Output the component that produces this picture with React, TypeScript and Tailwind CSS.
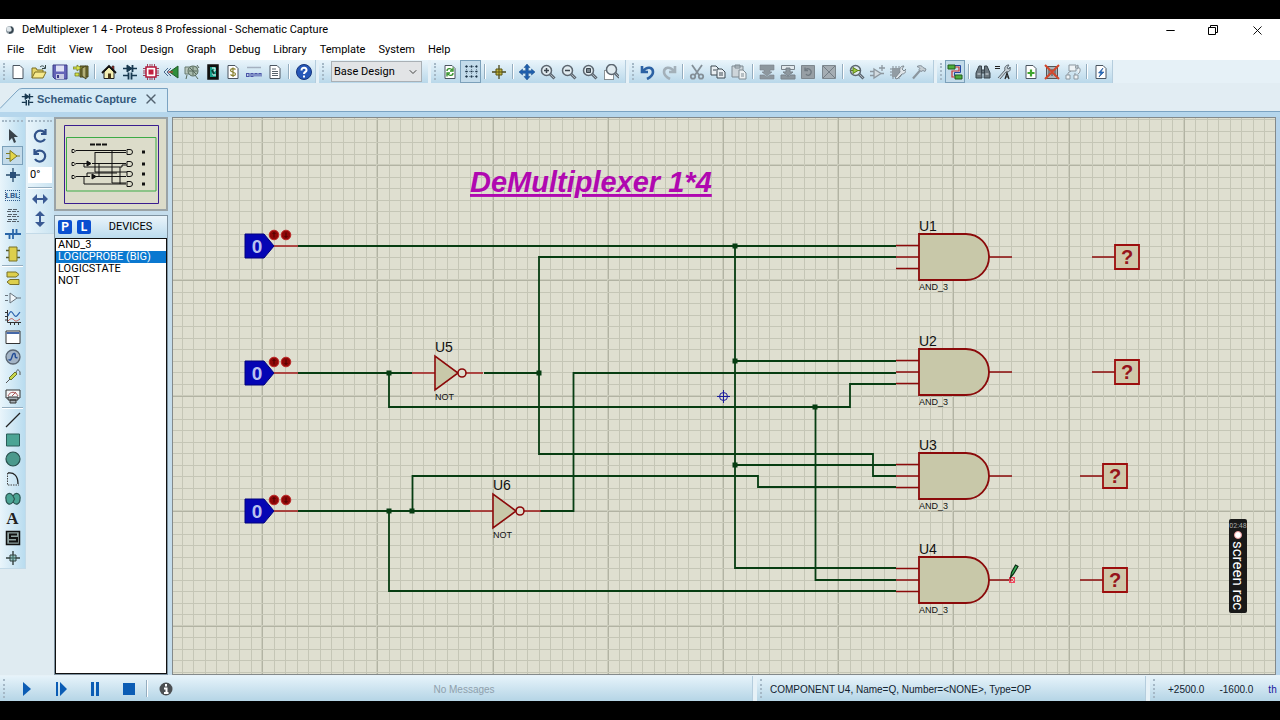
import type { ReactNode } from "react"
import { Minus, X, ChevronDown } from "lucide-react"

const menus = ["File", "Edit", "View", "Tool", "Design", "Graph", "Debug", "Library", "Template", "System", "Help"]

const page = <path d="M3 1.500h7l3 3v10H3z" fill="#fff" stroke="#4b5560" />

const lens = (
  <>
    <path d="M10 10l4.500 4.500" stroke="#5c6670" strokeWidth="3" />
    <path d="M10 10l4 4" stroke="#a9b4bd" />
    <circle cx="6.500" cy="6.500" r="5" fill="#e1ebf0" stroke="#5c6670" strokeWidth="1.500" />
  </>
)

const schematic = (
  <g stroke="#17384f" fill="#17384f">
    <path d="M1 4.500h14M1 11.500h5M10 11.500h5" fill="none" strokeWidth="1.500" />
    <path d="M5 1l5 3.500L5 8z" />
    <path d="M10.500 1v7M6.500 8.500v7M9.500 8.500v7" strokeWidth="1.800" />
  </g>
)

// all glyphs are drawn on a 16 x 16 box
const icons: Record<string, ReactNode> = {
  schematic,
  new: page,
  open: (
    <>
      <path d="M1 14V4h4l1 2h6v2" fill="#e5d56a" stroke="#7c6f22" />
      <path d="M1 14l3-6h11l-3 6z" fill="#f6e98c" stroke="#7c6f22" />
      <path d="M9 3c2-2 4-1 5 1M14.500 1v3.500H11" fill="none" stroke="#344" />
    </>
  ),
  save: (
    <>
      <path d="M1 1h14v14H3l-2-2z" fill="#6464b8" stroke="#3b3b86" />
      <path d="M4 1.500h8v6H4z" fill="#dfe1f5" />
      <path d="M4 10h8v5H4z" fill="#c8cbe4" />
      <path d="M5 11h2v3H5z" fill="#3b3b86" />
    </>
  ),
  exit: (
    <>
      <path d="M7 2h8v11H7z" fill="#7d7a34" stroke="#44431c" />
      <path d="M9 4l4-2v13l-4-3z" fill="#b3b077" stroke="#44431c" />
      <path d="M0 3h4V1l4 3-4 3V5H0zM2 9h4v3H2z" fill="#d8e34a" stroke="#66701b" strokeWidth=".7" />
    </>
  ),
  home: (
    <>
      <path d="M11 2h2v4h-2z" fill="#a33" stroke="#222" strokeWidth=".6" />
      <path d="M3 8v6.500h10V8L8 3z" fill="#f3efb4" stroke="#222" />
      <path d="M1 9l7-7 7 7" fill="none" stroke="#111" strokeWidth="1.800" />
      <path d="M7 9.500h3v5H7z" fill="#4a3816" />
    </>
  ),
  pcb: (
    <>
      <path d="M4.500 0v16M7 0v16M9 0v16M11.500 0v16M0 4.500h16M0 7h16M0 9h16M0 11.500h16" stroke="#8f1d35" strokeWidth=".8" />
      <path d="M3 3h10v10H3z" fill="#fff" stroke="#b3173b" strokeWidth="1.500" />
      <path d="M5.500 5.500h5v5h-5z" fill="#c21f3f" />
    </>
  ),
  view3d: (
    <>
      <path d="M15 2v12L6.500 8z" fill="#2f8f3b" stroke="#205c2a" />
      <path d="M5 4L1 8l4 4M8 4L4 8l4 4" fill="none" stroke="#4a6a8c" />
      <path d="M5 8h5" stroke="#c33" />
    </>
  ),
  gerber: (
    <>
      <path d="M1 3h12v7H1z" fill="#b9c7bd" stroke="#667a70" />
      <circle cx="9" cy="7" r="5" fill="#a9bcae" stroke="#56695c" />
      <path d="M5 7h8M9 3v8M6 4l6 6M3 11l-1 4M11 11l3 4M13 1l2 3" stroke="#56695c" />
    </>
  ),
  explorer: (
    <>
      <path d="M3 1h10v14H3z" fill="#111" stroke="#111" strokeWidth="1.500" />
      <path d="M5 3h6v10H5z" fill="#17a08c" />
      <path d="M7 4h3v3H8v4h3" fill="none" stroke="#fff" />
      <path d="M7 6l2 4" stroke="#0a4035" strokeWidth="2" />
    </>
  ),
  bom: (
    <>
      {page}
      <path d="M10.500 5.500C9 4 5.500 4.500 5.500 6.500S10.500 8 10.500 10 7 12 5.500 10.500M8 3.500v9.500" fill="none" stroke="#8b8434" strokeWidth="1.200" />
    </>
  ),
  source: (
    <>
      <path d="M1 3.500h14" stroke="#a5b1c0" strokeWidth="1.500" />
      <path d="M.500 9.500h2.500v3H.500zM5 9.500h2v3H5zM9 12.500v-3h2v3M13 12.500v-3h2v3" fill="none" stroke="#4b55a8" strokeWidth="1.200" />
    </>
  ),
  notes: (
    <>
      {page}
      <path d="M5 5h4M5 7.500h6M5 9.500h6M5 11.500h6" stroke="#59636b" />
    </>
  ),
  help: (
    <>
      <circle cx="8" cy="8" r="7.500" fill="#2557b8" stroke="#17357c" />
      <path d="M5.500 6.500C5.500 2.500 11 3 10.500 6.500 10.300 8 8 8 8 10M8 11.500v2" fill="none" stroke="#fff" strokeWidth="2" />
    </>
  ),
  redraw: (
    <>
      {page}
      <path d="M5 7c0-3 4-3 5-1M11 3.500V7H8M11 9c0 3-4 3-5 1M5 12.500V9h3" fill="none" stroke="#36912b" strokeWidth="1.400" />
    </>
  ),
  grid: (
    <>
      <path d="M2 2.500h12M2 7.500h12M2 12.500h12M3.500 1v14M8.500 1v14M13.500 1v14" stroke="#5a7285" strokeWidth=".8" strokeDasharray="1 1" />
      <path d="M2.500 2.500h2M7.500 2.500h2M12.500 2.500h2M2.500 7.500h2M7.500 7.500h2M12.500 7.500h2M2.500 12.500h2M7.500 12.500h2M12.500 12.500h2" stroke="#1d3344" strokeWidth="1.500" />
    </>
  ),
  origin: (
    <>
      <path d="M8 1v14M1 8h14" stroke="#4c4a1d" strokeWidth="1.300" />
      <path d="M5 5h6v6H5z" fill="#c2b53c" stroke="#5b5516" />
      <path d="M8 5v6M5 8h6" stroke="#5b5516" />
    </>
  ),
  pan: (
    <path d="M8 0l3 3.500H9.300v3.200h3.200V5L16 8l-3.500 3V9.300H9.300v3.200H11L8 16l-3-3.500h1.700V9.300H3.500V11L0 8l3.500-3v1.700h3.200V3.500H5z" fill="#1e5fae" stroke="#174a86" strokeWidth=".5" />
  ),
  zoomIn: <>{lens}<path d="M4 6.500h5M6.500 4v5" stroke="#3c464e" strokeWidth="1.500" /></>,
  zoomOut: <>{lens}<path d="M4 6.500h5" stroke="#3c464e" strokeWidth="1.500" /></>,
  zoomAll: <>{lens}<path d="M4.500 4.500h4v4h-4z" fill="#7b868e" stroke="#3c464e" /></>,
  zoomArea: (
    <>
      <path d="M1.500 6.500h9v9h-9z" fill="#fff" stroke="#333" strokeDasharray="1 1" />
      <g transform="translate(2 -1)">{lens}</g>
    </>
  ),
  undo: <path d="M2 2v6h6M3 7c4-5 10-4 10 1 0 3-2 5-6 7" fill="none" stroke="#2c62a4" strokeWidth="2.600" />,
  redo: <path d="M14 2v6H8M13 7C9 2 3 3 3 8c0 3 2 5 6 7" fill="none" stroke="#a3b0b9" strokeWidth="2.600" />,
  cut: (
    <g fill="none" stroke="#848f97" strokeWidth="1.800">
      <path d="M3 1l7 10M13 1L6 11" />
      <circle cx="4" cy="12.500" r="2.200" />
      <circle cx="12" cy="12.500" r="2.200" />
    </g>
  ),
  copy: (
    <g fill="#e9eff3" stroke="#3f4a53">
      <path d="M1 2h5l3 3v6H1z" />
      <path d="M7 5h5l3 3v6H7z" />
      <path d="M9 9h4M9 11h4M3 6h3" />
    </g>
  ),
  paste: (
    <g fill="#cdd5da" stroke="#7f8a92">
      <path d="M1 2h11v11H1zM4 1h5v3H4z" />
      <path d="M8 6h4l3 3v6H8z" fill="#eef2f4" />
      <path d="M10 10h3M10 12h3" />
    </g>
  ),
  blockCopy: <path d="M1 1h14v5h-4v2h2l-5 4-5-4h2V6H1zM1 11h4l3 2 3-2h4v4H1z" fill="#8d979e" stroke="#78828a" strokeWidth=".6" />,
  blockMove: (
    <g stroke="#78828a">
      <path d="M1.500 1.500h13v4h-13z" fill="#e2e9ed" />
      <path d="M6 4h4v4h3l-5 4-5-4h3zM1 11h4l3 2 3-2h4v4H1z" fill="#8d979e" />
    </g>
  ),
  blockRotate: (
    <>
      <path d="M1.500 1.500h13v13h-13z" fill="#979fa5" stroke="#7d878e" />
      <path d="M5 6c3-3 7 0 6 3s-4 3-5 1M5 3.500v3h3" fill="none" stroke="#6f7980" strokeWidth="1.300" />
    </>
  ),
  blockDelete: (
    <>
      <path d="M1.500 1.500h13v13h-13z" fill="#a5adb3" stroke="#7d878e" />
      <path d="M2 2l12 12M14 2L2 14" stroke="#737d85" />
    </>
  ),
  pick: <>{lens}<path d="M4 3.500l5 3-5 3zM2 6.500h2M9 6.500h2" fill="#9ccc3d" stroke="#5b7d1f" /></>,
  make: (
    <g stroke="#8d979f" strokeWidth="1.300">
      <path d="M4 5l7 4.500L4 14z" fill="#d3dbe0" />
      <path d="M0 7.500h4M0 11.500h4M11 9.500h3M12 1v6M9 4h6" fill="none" />
    </g>
  ),
  packaging: (
    <>
      <path d="M3 2v13M6 2v13M9 2v13M0 5h12M0 8h12M0 11h12" stroke="#7e8991" />
      <path d="M2 4h9v9H2z" fill="#929ca3" />
      <path d="M5 14l5-6c-1-4 1-6 4-6l-2 3 2 2 2-2c0 4-2 5-4 5l-5 5z" fill="#dfe5e9" stroke="#7e8991" />
    </>
  ),
  decompose: (
    <>
      <path d="M2 14.500L9.500 6" stroke="#8b969e" strokeWidth="2.200" />
      <path d="M6 2.500c3-1.500 5-1 6 1l3 1.500-1 2.500-2-1-2 1-2-2 1-1c-1-1-2-1.500-3-2z" fill="#c5cdd2" stroke="#84909a" />
    </>
  ),
  autoroute: (
    <>
      <path d="M8 3h4v4H5v6h4" fill="none" stroke="#c33" strokeWidth="1.200" />
      <path d="M8 1.500h5.500v7h-6v3H10" fill="none" stroke="#2547a0" />
      <path d="M1 1h7v4H1zM8 11h7v4H8z" fill="#4fae3d" stroke="#205c1d" />
    </>
  ),
  search: (
    <g fill="#6c7880" stroke="#37424a">
      <path d="M4 2h2.500v4L7 14H1V9zM12 2H9.500v4L9 14h6V9z" />
      <path d="M6.500 6h3v3h-3z" />
      <path d="M2.500 10h3M10.500 10h3" stroke="#dbe3e8" />
    </g>
  ),
  assign: (
    <g stroke="#5c6770" fill="none">
      <path d="M0 2.500h5M0 4.500h5" stroke="#222" />
      <path d="M3 14l7-8c-1-3 1-5 4-5l-2 3 2 1 1-2c1 4-1 5-4 5l-6 7" fill="#c6d0d6" />
      <path d="M10 15l2-6 2 6M10.500 13h3" stroke="#222" strokeWidth="1.200" />
    </g>
  ),
  newSheet: <>{page}<path d="M8 5.500v7M4.500 9h7" stroke="#3fa52d" strokeWidth="2.200" /></>,
  removeSheet: (
    <>
      <path d="M2.500 2.500h11v12h-11z" fill="#aeb5ba" stroke="#555" />
      <path d="M5 5v7M8 5v7M11 5v7" stroke="#444" />
      <path d="M1 1l14 14M15 1L1 15" stroke="#d3472b" strokeWidth="2" />
    </>
  ),
  exitSheet: (
    <g fill="#eef3f6" stroke="#8c979f">
      <path d="M4 1h7v6H4zM1 11h4v4H1zM9 11h4v4H9zM3 11V9l3-2M10 11V9" />
      <path d="M12 3c4 0 4 5 1 7M10 3l3-2v4z" />
    </g>
  ),
  bus: <>{page}<path d="M10 4L5.500 9H8l-2 4 5-5H8z" fill="#2b73c8" stroke="#1c5396" strokeWidth=".6" /></>,

  // mode toolbar
  select: <path d="M4 1v12l3-3 2 5 2-1-2-5h4z" fill="#39424a" />,
  component: <path d="M1 5.500h4M1 10.500h4M11 8h4M5 2.500L12 8l-7 5.500z" fill="#e4d648" stroke="#7f7a25" />,
  junction: (
    <>
      <path d="M8 1v14M1 8h14" stroke="#274a6b" strokeWidth="1.300" />
      <path d="M5 5h6v6H5z" fill="#284e78" />
    </>
  ),
  script: <path d="M3 2.500h10M2 4.500h12M3 7.500h10M2 9.500h12M3 12.500h10M2 14.500h12" stroke="#555f68" strokeDasharray="4 1" />,
  busMode: <path d="M0 8h16M4.500 8v5M8 8v5M8 3v5M11.500 3v5" fill="none" stroke="#2a66a8" strokeWidth="1.800" />,
  subcircuit: (
    <>
      <path d="M1 4.500h14M1 11.500h14" stroke="#555b2f" strokeWidth="1.500" />
      <path d="M4 1h8v14H4z" fill="#ddcf4c" stroke="#77702b" />
    </>
  ),
  terminal: (
    <g fill="#ddcf4c" stroke="#77702b">
      <path d="M2 2h9l3 2.500L11 7H2z" />
      <path d="M14 9.500H5L2 12l3 2.500h9z" />
    </g>
  ),
  pin: <path d="M5 3l7 5-7 5zM0 5.500h3M0 10.500h3M12 8h4" fill="#f0f6fa" stroke="#68737c" />,
  graph: (
    <g fill="none">
      <path d="M2.500 1v12.500H16M0 3.500h2M0 7.500h2M0 11h2M5.500 14v2M9.500 14v2M13.500 14v2" stroke="#333" />
      <path d="M3 7c3-7 4-4 6-1s3 1 6-3" stroke="#2b62ad" strokeWidth="1.200" />
      <path d="M3 12c3-3 4-3 6-1s3 1 6-1" stroke="#c2564b" />
    </g>
  ),
  popup: (
    <>
      <path d="M1 2h14v12.500H1z" fill="#fff" stroke="#333" />
      <path d="M1.500 3h13v2h-13z" fill="#4568a8" />
    </>
  ),
  generator: (
    <>
      <circle cx="8" cy="8" r="7" fill="#a3b4c6" stroke="#5a6673" strokeWidth="1.300" />
      <path d="M3.500 10.500c4 3 3-7 6-6 2 1-1 5 3 4" fill="none" stroke="#244e97" strokeWidth="1.500" />
    </>
  ),
  probe: (
    <>
      <path d="M1 15l4-4M11 5c1-5 3-3 4-1v3" fill="none" stroke="#555" />
      <path d="M4 10l6-6 2 2-6 6z" fill="#c7d64c" stroke="#6a732a" />
    </>
  ),
  instrument: (
    <g stroke="#333">
      <path d="M1 2h14v8H1z" fill="#f4f6f7" />
      <path d="M3 8c2-5 8-5 10 0M7 8l4-4" fill="none" stroke="#a55" />
      <path d="M3 9h10v3H3zM5 12h6v3H5z" fill="#a8b1b7" />
    </g>
  ),
  line: <path d="M1 15L15 1" stroke="#222" strokeWidth="1.300" />,
  box: <path d="M1.500 2h13v12h-13z" fill="#4ba494" stroke="#2b5d58" />,
  circle: <circle cx="8" cy="8" r="7" fill="#4b998c" stroke="#284f4c" strokeWidth="1.200" />,
  arc: (
    <g fill="none">
      <path d="M2.500 2v12H14" stroke="#444" strokeDasharray="1.500 1" />
      <path d="M3 2c6-1 10 3 10 11" stroke="#222" strokeWidth="1.300" />
    </g>
  ),
  path: <path d="M8 5c3-5 8-2 7 3 0 5-4 7-7 3-3 4-7 2-7-3-1-5 4-8 7-3zM8 5l1.500 3L8 11" fill="#4ba494" stroke="#2b5652" strokeWidth="1.200" />,
  symbol: (
    <>
      <path d="M1.500 1.500h13v13h-13z" fill="#8ea19f" stroke="#111" strokeWidth="1.500" />
      <path d="M12 4.500H5v3.500h7v3.500H4" fill="none" stroke="#111" strokeWidth="2" />
    </>
  ),
  marker: (
    <g stroke="#33413f" fill="none">
      <path d="M8 1v14M1 8h14" strokeWidth="1.400" />
      <path d="M5 5h6v6H5z" fill="#5da69a" fillOpacity=".5" />
    </g>
  ),
  rotateCw: <path d="M13 11a5.500 5.500 0 1 1-.5-6.500M13.500 1v5H9" fill="none" stroke="#31538a" strokeWidth="2.200" />,
  rotateCcw: <path d="M3 11a5.500 5.500 0 1 0 .5-6.500M2.500 1v5H7" fill="none" stroke="#31538a" strokeWidth="2.200" />,
  flipX: <path d="M0 8l5-5v4h6V3l5 5-5 5V9H5v4z" fill="#3a5a94" />,
  flipY: <path d="M8 0l5 5H9v6h4l-5 5-5-5h4V5H3z" fill="#3a5a94" />,

  // simulation
  play: <path d="M4 1l8 7-8 7z" fill="#0b5cb4" />,
  step: <path d="M3 1h2v14H3zM7 1l7 7-7 7z" fill="#0b5cb4" />,
  pause: <path d="M4 1h3v14H4zM9 1h3v14H9z" fill="#0b5cb4" />,
  stop: <path d="M2 2h12v12H2z" fill="#0b5cb4" />,
  info: (
    <>
      <circle cx="8" cy="8" r="6.500" fill="#4c4f52" />
      <path d="M8 3v2.500M6 7.500h2.500V12M6 12h4.500" fill="none" stroke="#fff" strokeWidth="2" />
    </>
  ),
}

type ToolbarProps = {
  padding: string
  sections: { width: string; items: string[] }[]
}

const toolbars: ToolbarProps[] = [
  {
    padding: "pr-px",
    sections: [
      { width: "w-[83px]", items: ["new", "open", "save", "exit"] },
      { width: "w-[186px]", items: ["home", "schematic", "pcb", "view3d", "gerber", "explorer", "bom", "source", "notes"] },
      { width: "w-[21px]", items: ["help"] },
    ],
  },
  {
    padding: "pr-1",
    sections: [
      { width: "w-[42px]", items: ["redraw", "grid"] },
      { width: "w-5", items: ["origin"] },
      { width: "w-[104px]", items: ["pan", "zoomIn", "zoomOut", "zoomAll", "zoomArea"] },
    ],
  },
  {
    padding: "pr-1",
    sections: [
      { width: "w-[42px]", items: ["undo", "redo"] },
      { width: "w-[62px]", items: ["cut", "copy", "paste"] },
      { width: "w-[82px]", items: ["blockCopy", "blockMove", "blockRotate", "blockDelete"] },
      { width: "w-[82px]", items: ["pick", "make", "packaging", "decompose"] },
    ],
  },
  {
    padding: "pr-px",
    sections: [
      { width: "w-5", items: ["autoroute"] },
      { width: "w-10", items: ["search", "assign"] },
      { width: "w-[62px]", items: ["newSheet", "removeSheet", "exitSheet"] },
      { width: "w-5", items: ["bus"] },
    ],
  },
]

const modes = [
  { height: "h-[138px]", items: ["select", "component", "junction", "label", "script", "busMode", "subcircuit"] },
  { height: "h-[138px]", items: ["terminal", "pin", "graph", "popup", "generator", "probe", "instrument"] },
  { height: "h-[158px]", items: ["line", "box", "circle", "arc", "path", "text", "symbol", "marker"] },
]

const devices = ["AND_3", "LOGICPROBE (BIG)", "LOGICSTATE", "NOT"]

const pressed = ["grid", "autoroute", "component"]

function Icon({ name }: { name: string }) {
  if (name === "label") {
    return <span className="border border-dotted border-[#2f5b8c] text-[8px] leading-[9px] font-bold text-[#2f5b8c]">LBL</span>
  }
  if (name === "text") {
    return <span className="font-['Liberation_Serif',serif] text-[17px] leading-4 font-bold text-[#222]">A</span>
  }
  return (
    <svg viewBox="0 0 16 16" className="size-4 shrink-0" aria-hidden="true">
      {icons[name]}
    </svg>
  )
}

function ToolButton({ name }: { name: string }) {
  const state = pressed.includes(name) ? "border-[#7ba0ba] bg-[#c3dbea]" : "border-transparent"
  return (
    <button type="button" aria-label={name} className={`flex min-h-0 min-w-0 flex-1 items-center justify-center border ${state}`}>
      <Icon name={name} />
    </button>
  )
}

function Grip() {
  return <span className="m-[3px] shrink-0 border-l-2 border-dotted border-[#a5b8c6]" />
}

function Toolbar({ padding, sections }: ToolbarProps) {
  return (
    <div className={`flex shrink-0 border-r border-[#b5cddd] bg-linear-to-b from-[#eaf5fb] to-[#b9d8ea] ${padding}`}>
      <Grip />
      {sections.map((s, i) => (
        <div key={i} className="flex">
          {i > 0 && <span className="mx-[3px] my-1 w-[2px] border-l border-[#94adbf] bg-white" />}
          <div className={`flex ${s.width}`}>
            {s.items.map((name) => <ToolButton key={name} name={name} />)}
          </div>
        </div>
      ))}
    </div>
  )
}

function Header() {
  return (
    <header className="shrink-0 bg-white text-black">
      <div className="flex h-[22px] items-center pl-[5px]">
        <svg viewBox="0 0 10 10" className="mr-[7px] size-[10px]" aria-hidden="true">
          <circle cx="5" cy="5" r="4" fill="#8b979f" />
          <circle cx="4" cy="4" r="2.500" fill="#dfe6ea" />
          <path d="M6 2c3 2 2 6-2 6" fill="none" stroke="#34424c" strokeWidth="1.500" />
        </svg>
        <h1 className="flex-1">DeMultiplexer 1 4 - Proteus 8 Professional - Schematic Capture</h1>
        <button type="button" aria-label="Minimize" className="flex w-[42px] justify-center"><Minus size={13} strokeWidth={2} /></button>
        <button type="button" aria-label="Restore" className="flex w-[43px] justify-center">
          <svg viewBox="0 0 12 12" className="size-3" fill="none" stroke="#000">
            <path d="M1.500 3.500h7v7h-7zM3.500 3.500v-2h7v7h-2" />
          </svg>
        </button>
        <button type="button" aria-label="Close" className="flex w-[46px] justify-center"><X size={15} strokeWidth={1.500} /></button>
      </div>
      <nav className="flex h-[19px] items-center gap-[13px] pl-[7px]">
        {menus.map((m) => <button type="button" key={m}>{m}</button>)}
      </nav>
    </header>
  )
}

function ToolbarRow() {
  return (
    <div className="flex h-[23px] shrink-0 gap-[3px] bg-[#e6f1f7]">
      <Toolbar {...toolbars[0]} />
      <div className="flex shrink-0 bg-linear-to-b from-[#eaf5fb] to-[#b9d8ea] pr-[6px]">
        <Grip />
        <div className="relative ml-1 flex">
          <select aria-label="Design variant" className="my-px w-[91px] appearance-none border border-[#a9b0b5] bg-[#e2e4e6] pl-[2px] leading-4">
            <option>Base Design</option>
          </select>
          <ChevronDown size={12} className="pointer-events-none absolute top-[6px] right-[3px] text-[#444]" />
        </div>
      </div>
      <Toolbar {...toolbars[1]} />
      <Toolbar {...toolbars[2]} />
      <Toolbar {...toolbars[3]} />
    </div>
  )
}

function TabRow() {
  return (
    <div className="flex h-[34px] shrink-0 flex-col bg-[#e2edf3]">
      <div className="flex flex-1 items-end border-b border-[#7ba3c2]">
        <div className="relative -mb-px flex h-6 w-[168px] items-center pb-[2px] pl-[21px]">
          <svg viewBox="0 0 168 24" className="absolute inset-0 size-full" aria-hidden="true">
            <path d="M0 20.500L17 3Q19 .5 22 .5H167.500V24H0z" fill="#d5eaf6" />
            <path d="M0 20.500L17 3Q19 .5 22 .5H167.500V24" fill="none" stroke="#7ba3c2" />
          </svg>
          <div className="relative flex items-center">
            <svg viewBox="0 0 16 16" className="size-[13px]" aria-hidden="true">{schematic}</svg>
            <span className="ml-[3px] font-['Liberation_Sans',sans-serif] font-bold text-[#34597b]">Schematic Capture</span>
            <button type="button" aria-label="Close tab" className="ml-[6px] text-[#536270]"><X size={16} strokeWidth={2} /></button>
          </div>
        </div>
      </div>
      <div className="h-[5px] bg-[#b5d6ec]" />
    </div>
  )
}

function ModeBar() {
  return (
    <aside className="flex shrink-0 items-start bg-[#dfebf1]">
      <div className="w-[26px] border-r border-b border-[#c3dae8] bg-linear-to-r from-[#e9f5fb] to-[#b9dcef] px-[2px]">
        <div className="mt-[3px] mb-1 border-t-2 border-dotted border-[#a5b8c6]" />
        {modes.map((m, i) => (
          <div key={i}>
            {i > 0 && <div className="my-px h-[2px] border-t border-[#94adbf] bg-white" />}
            <div className={`flex flex-col ${m.height}`}>
              {m.items.map((name) => <ToolButton key={name} name={name} />)}
            </div>
          </div>
        ))}
      </div>
      <div className="flex w-7 flex-col border-b border-[#c3dae8] bg-linear-to-r from-[#e9f5fb] to-[#c9e3f1] px-[2px] pb-1">
        <div className="mt-[3px] mb-1 border-t-2 border-dotted border-[#a5b8c6]" />
        <div className="flex h-10 flex-col">
          <ToolButton name="rotateCw" />
          <ToolButton name="rotateCcw" />
        </div>
        <input aria-label="Rotation" defaultValue="0°" className="mt-px h-4 w-full bg-white px-[2px]" />
        <div className="mt-1 h-[2px] border-t border-[#94adbf] bg-white" />
        <div className="flex h-10 flex-col">
          <ToolButton name="flipX" />
          <ToolButton name="flipY" />
        </div>
      </div>
    </aside>
  )
}

function Overview() {
  return (
    <div className="border-2 border-[#9aa3a6] bg-[#dcdcca]">
      <svg viewBox="0 0 110 90" className="block w-full" aria-hidden="true">
        <path d="M8.500 6.500h94v78h-94z" fill="none" stroke="#3a1d8f" />
        <path d="M10.500 18.500h89.500v53.500h-89.500z" fill="none" stroke="#3cab46" />
        <path d="M34 25.500h18" stroke="#111" strokeWidth="2" strokeDasharray="5 1" />
        <g fill="none" stroke="#111">
          <path d="M20 31.500h50M20 44.500h11M36 44.500h34M20 57.500h14M39 57.500h31M28 57v8h42M39 33.500h31M39 33v20h34v3M56 31v33h14M43 58V44M64 48v17M28 45v3h38v-2h6M31 57v-3h30" />
          <path d="M31 42l4 2.500-4 2.500zM36 55l4 2.500-4 2.500z" fill="#111" />
          {[33, 45, 55, 65].map((y) => (
            <path key={y} d={`M71 ${y - 2.5}h3a2.500 2.500 0 0 1 0 5h-3z`} fill="#dcdcca" />
          ))}
        </g>
        {[33, 45, 55, 65].map((y) => (
          <path key={y} d={`M86 ${y - 1.5}h3v3h-3z`} fill="#111" />
        ))}
        {[32, 45, 58].map((y) => (
          <path key={y} d={`M16 ${y - 1.5}h2l1.500 1.500-1.500 1.500h-2z`} fill="none" stroke="#111" />
        ))}
      </svg>
    </div>
  )
}

function SidePanel() {
  return (
    <div className="flex w-[118px] shrink-0 flex-col bg-[#c5ddec] pr-1">
      <Overview />
      <div className="mt-1 flex min-h-0 flex-1 flex-col border border-[#7f93a1]">
        <div className="flex h-[22px] shrink-0 items-center gap-[5px] bg-linear-to-b from-[#eaf4fa] to-[#bcdcee] pl-[3px]">
          {["P", "L"].map((k) => (
            <button type="button" key={k} className="size-[14px] rounded-xs bg-[#0a4fd0] text-[12px] leading-[14px] font-bold text-white">{k}</button>
          ))}
          <h2 className="flex-1 pr-[2px] text-center">DEVICES</h2>
        </div>
        <ul className="flex-1 border border-[#111] bg-white leading-3">
          {devices.map((d) => (
            <li key={d} className={d === "LOGICPROBE (BIG)" ? "bg-[#0a78d0] px-[2px] text-white" : "px-[2px]"}>{d}</li>
          ))}
        </ul>
      </div>
    </div>
  )
}

const PITCH = 11.52
const steps = Array.from({ length: 241 }, (_, i) => i - 120)

const wires = [
  "M298 246H896",
  "M484 373H539M896 257H539V454H873V476H896",
  "M735 246V568H896M735 361H896M735 465H896",
  "M540 511H573.500V373H896",
  "M298 373H412M389 373V407H850V384H896M815.500 407V580H896",
  "M298 511H470M412.500 511V476H758V487H896M389 511V591H896",
]

const junctions = [[735, 246], [735, 361], [735, 465], [389, 373], [539, 373], [815, 407], [389, 511], [412, 511]]

function Gate({ name, y }: { name: string; y: number }) {
  return (
    <g transform={`translate(919 ${y})`}>
      <path d="M-23 -11.500H0M-23 0H0M-23 11.500H0M70 0H93" stroke="#8b0a0a" strokeWidth="1.500" />
      <path d="M0 -23H47A23 23 0 0 1 47 23H0z" fill="#c8c8a9" stroke="#8b0a0a" strokeWidth="1.800" />
      <text x="0" y="-26" fontSize="14" fill="#111">{name}</text>
      <text x="0" y="33" fontSize="9" fill="#111">AND_3</text>
    </g>
  )
}

function Inverter({ name, x, y }: { name: string; x: number; y: number }) {
  return (
    <g transform={`translate(${x} ${y})`}>
      <path d="M-23 0H0M31 0H48" stroke="#a01818" strokeWidth="1.500" />
      <path d="M0 -17V17L23 0z" fill="#c8c8a9" stroke="#8b0a0a" strokeWidth="1.600" />
      <circle cx="27" cy="0" r="4" fill="#dfdfd0" stroke="#8b0a0a" strokeWidth="1.600" />
      <text x="0" y="-21" fontSize="14" fill="#111">{name}</text>
      <text x="0" y="27" fontSize="9" fill="#111">NOT</text>
    </g>
  )
}

function LogicState({ y }: { y: number }) {
  return (
    <g transform={`translate(245 ${y})`}>
      <path d="M29 0H53" stroke="#a01818" strokeWidth="1.500" />
      <path d="M0 -12H19L29 0L19 12H0z" fill="#0505b4" stroke="#02027c" />
      <text x="12" y="7" fontSize="19" fontWeight="bold" textAnchor="middle" fill="#b9c0ee">0</text>
      {[29, 41].map((cx) => (
        <g key={cx}>
          <circle cx={cx} cy="-11" r="4.800" fill="#8f0808" stroke="#bd2626" />
          <path d={`M${cx} -13.500v5M${cx - 1.5} ${cx === 29 ? -12 : -10}l1.500 ${cx === 29 ? -1.5 : 1.5} 1.500 ${cx === 29 ? 1.5 : -1.5}`} fill="none" stroke="#4a0000" />
        </g>
      ))}
    </g>
  )
}

function Probe({ x, y }: { x: number; y: number }) {
  return (
    <g transform={`translate(${x} ${y})`}>
      <path d="M-35 0H-12" stroke="#8b0a0a" strokeWidth="1.500" />
      <path d="M-12 -12H12V12H-12z" fill="#d0c8aa" stroke="#9c0d0d" strokeWidth="1.800" />
      <text x="0" y="7" fontSize="20" fontWeight="bold" textAnchor="middle" fill="#96131a">?</text>
    </g>
  )
}

function Sheet() {
  return (
    <main className="relative min-w-0 flex-1 overflow-hidden border border-[#83898a] bg-[#dfdfd0]">
      <svg className="absolute inset-0 size-full font-['Liberation_Sans',Arial,sans-serif]">
        <g transform="translate(-173 -118)">
          <g shapeRendering="crispEdges">
            {steps.map((n) => {
              const x = Math.round(723 + n * PITCH)
              const y = Math.round(395.5 + n * PITCH)
              return <path key={n} d={`M${x}.5 0V4000M0 ${y}.5H4000`} stroke={n % 10 === 0 ? "#b2b3a3" : "#c5c6b6"} fill="none" />
            })}
            {steps.filter((n) => n % 10 === 0).map((n) => (
              <path key={n} d={`M${Math.round(722 + n * PITCH)}.5 0V4000M0 ${Math.round(394.5 + n * PITCH)}.5H4000`} stroke="#cbccbc" />
            ))}
          </g>

          <text x="470" y="192" fontSize="29" fontWeight="bold" fontStyle="italic" fill="#b008b0" textDecoration="underline">DeMultiplexer 1*4</text>

          <g fill="none" stroke="#073d12" strokeWidth="1.800">
            {wires.map((d) => <path key={d} d={d} />)}
          </g>
          {junctions.map(([x, y]) => (
            <rect key={`${x}-${y}`} x={x - 2.5} y={y - 2.5} width="5" height="5" fill="#073d12" />
          ))}

          <LogicState y={246} />
          <LogicState y={373} />
          <LogicState y={511} />
          <Inverter name="U5" x={435} y={373} />
          <Inverter name="U6" x={493} y={511} />
          <Gate name="U1" y={257} />
          <Gate name="U2" y={372} />
          <Gate name="U3" y={476} />
          <Gate name="U4" y={580} />
          <Probe x={1127} y={257} />
          <Probe x={1127} y={372} />
          <Probe x={1115} y={476} />
          <Probe x={1115} y={580} />

          <g fill="none" stroke="#1a1a9c">
            <circle cx="723.5" cy="396.5" r="4" />
            <path d="M717 396.500h13M723.500 390v13" />
          </g>

          <path d="M1009.500 577.500h5v5h-5zM1009 577l6 6M1015 577l-6 6" fill="none" stroke="#f2475f" />
          <path d="M1010.500 577.500l1-5 4-7.500 2.500 1.500-4.500 7.500z" fill="#39ae57" stroke="#0b2b13" strokeWidth="1.200" />
        </g>
      </svg>

      <div className="absolute top-[401px] right-7 flex h-[94px] w-[18px] flex-col items-center rounded-xs bg-[#191919] text-white">
        <span className="mt-[3px] text-[7px] leading-[8px] text-[#aaa]">02:48</span>
        <span className="mt-px size-2 shrink-0 rounded-full border border-[#e99] bg-white" />
        <span className="mt-[2px] text-[15px] leading-[18px] whitespace-nowrap [writing-mode:vertical-rl]">screen rec</span>
      </div>
    </main>
  )
}

function StatusBar() {
  const bar = "flex bg-linear-to-b from-[#e6f3fa] to-[#b5d5e6]"
  return (
    <footer className="flex h-[26px] shrink-0 gap-1 border-t border-[#e6f1f7] bg-[#e6f1f7] font-['Liberation_Sans',sans-serif] text-[10px] text-[#12222f]">
      <div className={`${bar} w-[753px] shrink-0 border-r border-[#b5cddd]`}>
        <Grip />
        <div className="flex w-[138px] pl-[2px]">
          {["play", "step", "pause", "stop"].map((name) => <ToolButton key={name} name={name} />)}
        </div>
        <span className="my-1 w-[2px] border-l border-[#94adbf] bg-white" />
        <div className="ml-2 flex w-5"><ToolButton name="info" /></div>
        <p className="flex-1 self-center pt-px text-center text-[#8fa0ac]">No Messages</p>
      </div>
      <div className={`${bar} flex-1 border-r border-[#b5cddd]`}>
        <Grip />
        <p className="ml-[5px] self-center pt-px">COMPONENT U4, Name=Q, Number=&lt;NONE&gt;, Type=OP</p>
      </div>
      <div className={`${bar} w-[130px] shrink-0`}>
        <Grip />
        <p className="ml-[10px] flex items-center gap-[15px] pt-px whitespace-nowrap">
          <span>+2500.0</span>
          <span>-1600.0</span>
          <span className="text-[#17179c]">th</span>
        </p>
      </div>
    </footer>
  )
}

export default function App() {
  return (
    <div className="flex h-screen flex-col overflow-hidden bg-black py-[19px] font-[Roboto,sans-serif] text-[11px]">
      <Header />
      <ToolbarRow />
      <TabRow />
      <div className="flex min-h-0 flex-1 bg-[#dfebf1]">
        <ModeBar />
        <SidePanel />
        <Sheet />
        <div className="w-1 shrink-0 bg-[#b5d3ea]" />
      </div>
      <StatusBar />
    </div>
  )
}
